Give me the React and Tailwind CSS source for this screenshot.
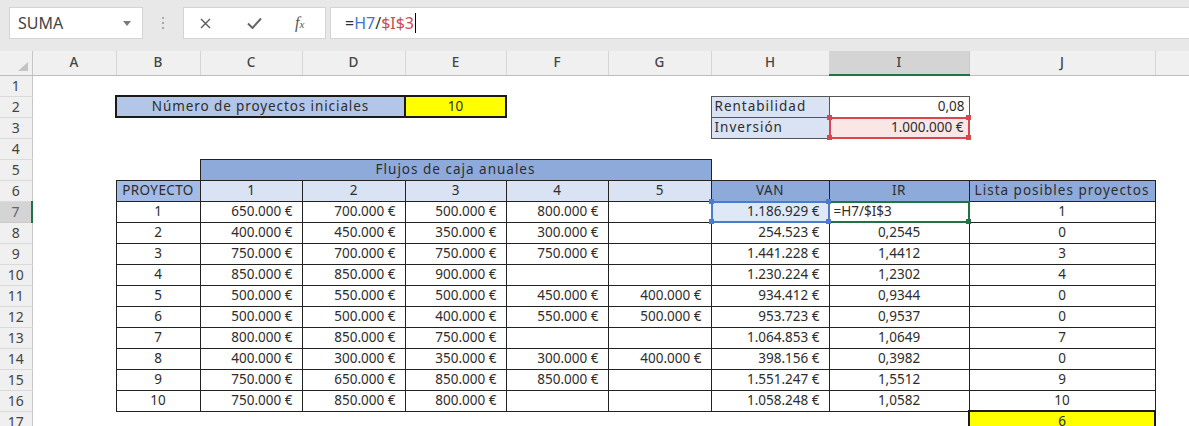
import React from 'react';

const rows = [
  ['1', '650.000 €', '700.000 €', '500.000 €', '800.000 €', '', '1.186.929 €', '=H7/$I$3', '1'],
  ['2', '400.000 €', '450.000 €', '350.000 €', '300.000 €', '', '254.523 €', '0,2545', '0'],
  ['3', '750.000 €', '700.000 €', '750.000 €', '750.000 €', '', '1.441.228 €', '1,4412', '3'],
  ['4', '850.000 €', '850.000 €', '900.000 €', '', '', '1.230.224 €', '1,2302', '4'],
  ['5', '500.000 €', '550.000 €', '500.000 €', '450.000 €', '400.000 €', '934.412 €', '0,9344', '0'],
  ['6', '500.000 €', '500.000 €', '400.000 €', '550.000 €', '500.000 €', '953.723 €', '0,9537', '0'],
  ['7', '800.000 €', '850.000 €', '750.000 €', '', '', '1.064.853 €', '1,0649', '7'],
  ['8', '400.000 €', '300.000 €', '350.000 €', '300.000 €', '400.000 €', '398.156 €', '0,3982', '0'],
  ['9', '750.000 €', '650.000 €', '850.000 €', '850.000 €', '', '1.551.247 €', '1,5512', '9'],
  ['10', '750.000 €', '850.000 €', '800.000 €', '', '', '1.058.248 €', '1,0582', '10'],
];

const letters = ['A', 'B', 'C', 'D', 'E', 'F', 'G', 'H', 'I', 'J', ''];

// small square handles drawn on the corners of a reference box
const Handle = ({ pos, color }) => (
  <span className={`absolute w-[5px] h-[5px] ${color} ${pos}`} />
);

const RowNum = ({ n, active }) => (
  <td
    className={
      active
        ? 'p-0 text-center text-[14px] text-[#666] bg-[#d4d4d4] border-b border-b-[#c9c9c9] border-r-2 border-r-[#217346]'
        : 'p-0 text-center text-[14px] text-[#444] bg-[#f0f0f0] border-b border-b-[#dadada] border-r border-r-[#c6c6c6]'
    }
  >
    {n}
  </td>
);

const cellB = 'p-0 border border-[#222]';
const cur = `${cellB} text-right pr-[9px] whitespace-nowrap`;
const mid = `${cellB} text-center`;

export default function App() {
  return (
    <div className="w-[1189px] h-[426px] overflow-hidden bg-white font-['Noto_Sans',sans-serif] text-[#2d2d2d]">
      {/* formula bar */}
      <div className="h-[51px] bg-[#e8e8e8] flex items-start pt-[7px]">
        <div className="ml-[9px] w-[134px] h-[32px] bg-white border border-[#d4d4d4] flex items-center justify-between pl-[8px] pr-[11px]">
          <span className="text-[16px] text-[#444]">SUMA</span>
          <svg width="8" height="5" viewBox="0 0 8 5">
            <path d="M0 0 L8 0 L4 5 Z" fill="#7b7b7b" />
          </svg>
        </div>
        <div className="w-[40px] h-[32px] flex flex-col items-center justify-center gap-[3px]">
          <span className="w-[2px] h-[2px] bg-[#a8a8a8]" />
          <span className="w-[2px] h-[2px] bg-[#a8a8a8]" />
          <span className="w-[2px] h-[2px] bg-[#a8a8a8]" />
        </div>
        <div className="w-[143px] h-[32px] bg-white border border-[#d4d4d4] flex items-center pl-[16px]">
          <svg width="11" height="11" viewBox="0 0 11 11">
            <path d="M1 1 L10 10 M10 1 L1 10" stroke="#5a5a5a" strokeWidth="1.4" />
          </svg>
          <svg className="ml-[36px]" width="15" height="12" viewBox="0 0 15 12">
            <path d="M1 6.5 L5.5 11 L14 1.5" stroke="#666" strokeWidth="2" fill="none" />
          </svg>
          <span className="ml-[33px] text-[16px] italic text-[#555] font-['Liberation_Serif',serif]">
            f<span className="text-[11px]">x</span>
          </span>
        </div>
        <div className="ml-[4px] flex-1 h-[32px] bg-white border border-r-0 border-[#d4d4d4] flex items-center pl-[14px] text-[16px]">
          <span className="text-[#333]">=</span>
          <span className="text-[#3f74c9]">H7</span>
          <span className="text-[#333]">/</span>
          <span className="text-[#d0494e]">$I$3</span>
          <span className="ml-[1px] w-px h-[20px] bg-black" />
        </div>
      </div>

      <table className="table-fixed border-collapse w-[1189px] text-[13.5px] leading-none">
        <colgroup>
          <col className="w-[32px]" />
          <col className="w-[84px]" />
          <col className="w-[84px]" />
          <col className="w-[102px]" />
          <col className="w-[103px]" />
          <col className="w-[101px]" />
          <col className="w-[102px]" />
          <col className="w-[103px]" />
          <col className="w-[118px]" />
          <col className="w-[140px]" />
          <col className="w-[186px]" />
          <col className="w-[34px]" />
        </colgroup>
        <thead>
          <tr className="h-[24px]">
            <th className="p-0 relative bg-[#f0f0f0] border-b border-b-[#bdbdbd] border-r border-r-[#c6c6c6]">
              <svg className="absolute right-[4px] bottom-[4px]" width="10" height="9" viewBox="0 0 10 9">
                <path d="M10 0 L10 9 L0 9 Z" fill="#c4c4c4" />
              </svg>
            </th>
            {letters.map((l, i) => (
              <th
                key={i}
                className={
                  l === 'I'
                    ? 'p-0 font-medium text-[13.5px] text-[#444] bg-[#d4d4d4] border-b-2 border-b-[#217346] border-r border-r-[#c9c9c9]'
                    : 'p-0 font-medium text-[13.5px] text-[#444] bg-[#f0f0f0] border-b border-b-[#bdbdbd] border-r border-r-[#d6d6d6]'
                }
              >
                {l}
              </th>
            ))}
          </tr>
        </thead>
        <tbody>
          <tr className="h-[21px]">
            <RowNum n={1} />
            <td colSpan={11} />
          </tr>
          <tr className="h-[21px]">
            <RowNum n={2} />
            <td />
            <td colSpan={3} className="p-0 text-center tracking-[0.9px] bg-[#b4c6e7] border-2 border-[#1a1a1a]">
              Número de proyectos iniciales
            </td>
            <td className="p-0 text-center bg-[#ffff00] border-2 border-[#1a1a1a]">10</td>
            <td colSpan={2} />
            <td className="p-0 pl-[3px] tracking-[1px] bg-[#dae3f3] border border-[#555]">Rentabilidad</td>
            <td className="p-0 pr-[4px] text-right bg-white border border-[#555]">0,08</td>
            <td colSpan={2} />
          </tr>
          <tr className="h-[21px]">
            <RowNum n={3} />
            <td colSpan={7} />
            <td className="p-0 pl-[3px] tracking-[1px] bg-[#dae3f3] border border-[#555]">Inversión</td>
            <td className="p-0 pr-[5px] text-right bg-[#fbe6e6] border border-[#555] relative">
              1.000.000 €
              <div className="absolute -left-px -right-px -top-px -bottom-px border-2 border-[#d9464c]">
                <Handle pos="-left-[3.5px] -top-[3.5px]" color="bg-[#d9464c]" />
                <Handle pos="-right-[3.5px] -top-[3.5px]" color="bg-[#d9464c]" />
                <Handle pos="-left-[3.5px] -bottom-[3.5px]" color="bg-[#d9464c]" />
                <Handle pos="-right-[3.5px] -bottom-[3.5px]" color="bg-[#d9464c]" />
              </div>
            </td>
            <td colSpan={2} />
          </tr>
          <tr className="h-[21px]">
            <RowNum n={4} />
            <td colSpan={11} />
          </tr>
          <tr className="h-[21px]">
            <RowNum n={5} />
            <td colSpan={2} />
            <td colSpan={5} className="p-0 text-center tracking-[1px] bg-[#8eaadb] border border-[#222]">
              Flujos de caja anuales
            </td>
            <td colSpan={4} />
          </tr>
          <tr className="h-[21px]">
            <RowNum n={6} />
            <td />
            <td className={`${mid} tracking-[0.4px] bg-[#a3bbe5]`}>PROYECTO</td>
            <td className={`${mid} bg-[#dae3f3]`}>1</td>
            <td className={`${mid} bg-[#dae3f3]`}>2</td>
            <td className={`${mid} bg-[#dae3f3]`}>3</td>
            <td className={`${mid} bg-[#dae3f3]`}>4</td>
            <td className={`${mid} bg-[#dae3f3]`}>5</td>
            <td className={`${mid} tracking-[0.5px] bg-[#8eaadb]`}>VAN</td>
            <td className={`${mid} tracking-[0.5px] bg-[#8eaadb]`}>IR</td>
            <td className={`${mid} tracking-[1px] bg-[#8eaadb] whitespace-nowrap`}>Lista posibles proyectos</td>
            <td />
          </tr>
          {rows.map((r, i) => {
            const first = i === 0;
            return (
              <tr key={i} className="h-[21px]">
                <RowNum n={i + 7} active={first} />
                <td />
                <td className={mid}>{r[0]}</td>
                <td className={cur}>{r[1]}</td>
                <td className={cur}>{r[2]}</td>
                <td className={cur}>{r[3]}</td>
                <td className={cur}>{r[4]}</td>
                <td className={cur}>{r[5]}</td>
                {first ? (
                  <td className={`${cur} relative bg-[#dfe8f6]`}>
                    {r[6]}
                    <div className="absolute -left-px -right-px -top-px -bottom-px border-2 border-[#4a7bd1]">
                      <Handle pos="-left-[3.5px] -top-[3.5px]" color="bg-[#4a7bd1]" />
                      <Handle pos="-right-[3.5px] -top-[3.5px]" color="bg-[#4a7bd1]" />
                      <Handle pos="-left-[3.5px] -bottom-[3.5px]" color="bg-[#4a7bd1]" />
                      <Handle pos="-right-[3.5px] -bottom-[3.5px]" color="bg-[#4a7bd1]" />
                    </div>
                  </td>
                ) : (
                  <td className={cur}>{r[6]}</td>
                )}
                {first ? (
                  <td className={`${cellB} relative text-left pl-[4px]`}>
                    {r[7]}
                    <div className="absolute left-[1px] -right-px -top-px -bottom-px border-2 border-l-0 border-[#217346]">
                      <Handle pos="-right-[3.5px] -bottom-[3.5px]" color="bg-[#217346]" />
                    </div>
                  </td>
                ) : (
                  <td className={mid}>{r[7]}</td>
                )}
                <td className={mid}>{r[8]}</td>
                <td />
              </tr>
            );
          })}
          <tr className="h-[21px]">
            <RowNum n={17} />
            <td colSpan={9} />
            <td className="p-0 text-center bg-[#ffff00] border-2 border-[#1a1a1a]">6</td>
            <td />
          </tr>
        </tbody>
      </table>
    </div>
  );
}
